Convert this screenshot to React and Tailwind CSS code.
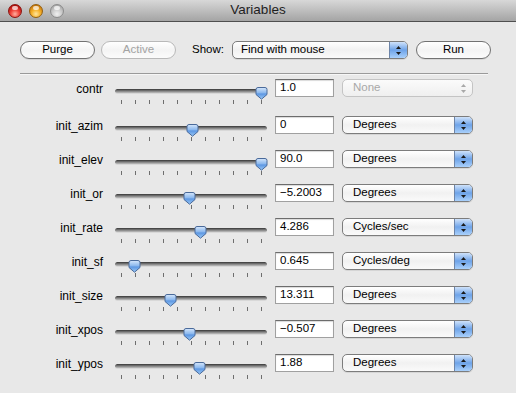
import React from "react";

const font = { fontFamily: '"Lucida Grande", "Liberation Sans", Arial, sans-serif' };

const rows = [
  { label: "contr", pos: 146, value: "1.0", unit: "None", disabled: true },
  { label: "init_azim", pos: 77, value: "0", unit: "Degrees" },
  { label: "init_elev", pos: 146, value: "90.0", unit: "Degrees" },
  { label: "init_or", pos: 74, value: "\u22125.2003", unit: "Degrees" },
  { label: "init_rate", pos: 85, value: "4.286", unit: "Cycles/sec" },
  { label: "init_sf", pos: 19, value: "0.645", unit: "Cycles/deg" },
  { label: "init_size", pos: 55, value: "13.311", unit: "Degrees" },
  { label: "init_xpos", pos: 74, value: "\u22120.507", unit: "Degrees" },
  { label: "init_ypos", pos: 84, value: "1.88", unit: "Degrees" },
];

function Light({ kind }) {
  const cls =
    kind === "red"
      ? "bg-[radial-gradient(circle_at_50%_75%,#ffb0a0_0%,#f0443a_40%,#b3110c_80%,#7a0604_100%)] border-[#8a1410]"
      : kind === "yellow"
      ? "bg-[radial-gradient(circle_at_50%_75%,#ffe6a0_0%,#f7b42e_40%,#c9780a_80%,#8c5000_100%)] border-[#946010]"
      : "bg-[radial-gradient(circle_at_50%_75%,#f0f0f0_0%,#cfcfcf_40%,#a9a9a9_80%,#8a8a8a_100%)] border-[#8c8c8c]";
  return (
    <div className={`relative w-[14px] h-[14px] rounded-full border ${cls}`}>
      <div className="absolute left-[3px] top-[1px] w-[6px] h-[4px] rounded-full bg-white/70" />
    </div>
  );
}

function Button({ children, disabled }) {
  return (
    <div
      className={`w-[75px] h-[18px] rounded-full border flex items-center justify-center text-[11.5px] leading-none bg-gradient-to-b from-white via-[#f4f4f4] to-[#fbfbfb] ${
        disabled ? "border-[#b9b9b9] text-[#a3a3a3]" : "border-[#727272] text-black shadow-[0_1px_0_rgba(0,0,0,0.08)]"
      }`}
    >
      {children}
    </div>
  );
}

function Arrows({ color }) {
  return (
    <svg width="7" height="11" viewBox="0 0 7 11">
      <path d="M3.5 1 L6 4 H1 Z" fill={color} />
      <path d="M3.5 10 L6 7 H1 Z" fill={color} />
    </svg>
  );
}

function Popup({ children, width, disabled, pad = "pl-[10px]" }) {
  return (
    <div
      className={`${width} h-[18px] rounded-[5px] border flex items-stretch overflow-hidden text-[11.5px] leading-none ${
        disabled
          ? "border-[#c4c4c4] text-[#a8a8a8] bg-gradient-to-b from-[#fbfbfb] to-[#efefef]"
          : "border-[#7c7c7c] text-black bg-gradient-to-b from-white via-[#f1f1f1] to-[#fafafa] shadow-[0_1px_0_rgba(0,0,0,0.08)]"
      }`}
    >
      <div className={`flex-1 flex items-center ${pad}`}>{children}</div>
      {disabled ? (
        <div className="w-[18px] flex items-center justify-center">
          <Arrows color="#a8a8a8" />
        </div>
      ) : (
        <div className="w-[18px] border-l border-[#6c84a8] flex items-center justify-center bg-gradient-to-b from-[#cfe2fa] via-[#6ea3e8] to-[#a9d0fb]">
          <Arrows color="#1a1a1a" />
        </div>
      )}
    </div>
  );
}

function Thumb() {
  return (
    <svg width="13" height="13" viewBox="0 0 13 13">
      <defs>
        <linearGradient id="tg" x1="0" y1="0" x2="0" y2="1">
          <stop offset="0" stopColor="#d6e7fb" />
          <stop offset="0.45" stopColor="#8bb8ee" />
          <stop offset="0.55" stopColor="#5d97e2" />
          <stop offset="1" stopColor="#9ccaf7" />
        </linearGradient>
      </defs>
      <path
        d="M1 2.5 Q1 0.5 3 0.5 H10 Q12 0.5 12 2.5 V7.5 L6.5 12.2 L1 7.5 Z"
        fill="url(#tg)"
        stroke="#4a6a9a"
        strokeWidth="1"
      />
    </svg>
  );
}

function Slider({ pos }) {
  const ticks = Array.from({ length: 11 }, (_, i) => i);
  return (
    <div className="relative w-[152px] h-[26px] shrink-0">
      <div className="absolute left-0 right-0 top-[10px] h-[5px] rounded-full bg-gradient-to-b from-[#363636] via-[#7e7e7e] to-[#c0c0c0] border-b border-[#d8d8d8]" />
      <div className="absolute left-[6px] top-[21px] w-[141px] h-[4px] flex justify-between">
        {ticks.map((t) => (
          <div key={t} className="w-px h-[4px] bg-[#6e6e6e]" />
        ))}
      </div>
      <div className="absolute top-[8px]" style={{ left: pos - 6 }}>
        <Thumb />
      </div>
    </div>
  );
}

export default function App() {
  return (
    <div className="w-[516px] h-[393px] bg-[#e8e8e8] overflow-hidden flex flex-col" style={font}>
      <div className="relative h-[22px] shrink-0 bg-gradient-to-b from-[#d8d8d8] via-[#bebebe] to-[#a4a4a4] border-b border-[#4f4f4f] flex items-center">
        <div className="flex gap-[7px] pl-[8px]">
          <Light kind="red" />
          <Light kind="yellow" />
          <Light kind="gray" />
        </div>
        <div className="absolute inset-0 flex items-center justify-center text-[13.5px] text-[#1e1e1e] pointer-events-none">
          Variables
        </div>
      </div>

      <div className="px-5">
        <div className="mt-[19px] flex items-center h-[18px]">
          <Button>Purge</Button>
          <div className="ml-[6px]">
            <Button disabled>Active</Button>
          </div>
          <div className="ml-[16px] text-[11.5px] text-black">Show:</div>
          <div className="ml-[8px]">
            <Popup width="w-[176px]" pad="pl-[8px]">Find with mouse</Popup>
          </div>
          <div className="ml-[8px]">
            <Button>Run</Button>
          </div>
        </div>

        <div className="mt-[14px] w-[468px] h-px bg-[#9a9a9a] shadow-[0_1px_0_#f6f6f6]" />

        <div className="mt-[5px] flex flex-col">
          {rows.map((r, i) => (
            <div key={r.label} className={`flex items-start ${i === 0 ? "h-[37px]" : "h-[34px]"}`}>
              <div className="w-[83px] h-[18px] mt-px flex items-center justify-end text-[12px] text-black shrink-0">
                {r.label}
              </div>
              <div className="ml-[12px]">
                <Slider pos={r.pos} />
              </div>
              <div className="ml-[8px] w-[59px] h-[18px] bg-white border border-[#a0a0a0] border-t-[#6c6c6c] shadow-[inset_0_1px_1px_rgba(0,0,0,0.15)] flex items-center pl-[4px] text-[11.5px] text-black shrink-0">
                {r.value}
              </div>
              <div className="ml-[8px]">
                <Popup width="w-[131px]" disabled={r.disabled}>
                  {r.unit}
                </Popup>
              </div>
            </div>
          ))}
        </div>
      </div>
    </div>
  );
}
